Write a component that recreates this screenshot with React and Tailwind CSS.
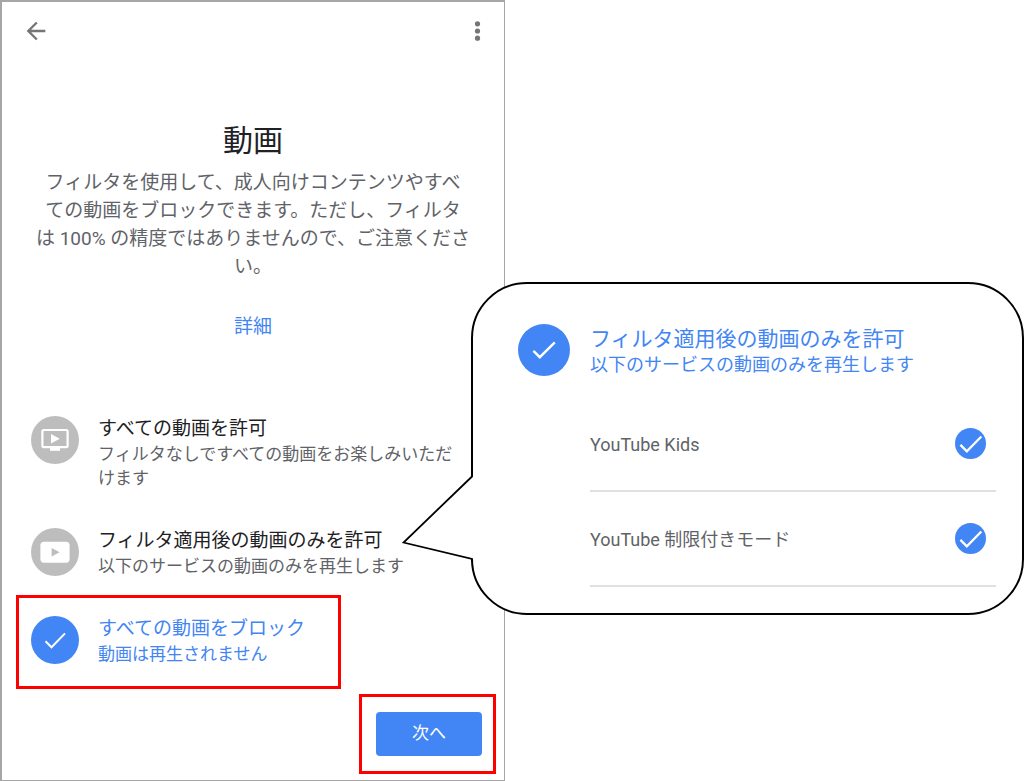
const OPTIONS = [
  {
    id: "allow",
    icon: "tv",
    title: "すべての動画を許可",
    note: "フィルタなしですべての動画をお楽しみいただけます",
  },
  {
    id: "filtered",
    icon: "player",
    title: "フィルタ適用後の動画のみを許可",
    note: "以下のサービスの動画のみを再生します",
  },
  {
    id: "block",
    icon: "check",
    title: "すべての動画をブロック",
    note: "動画は再生されません",
    selected: true,
  },
];

const SERVICES = [
  { id: "kids", name: "YouTube Kids" },
  { id: "restricted", name: "YouTube 制限付きモード" },
];

function OptionIcon({ kind }) {
  if (kind === "tv") {
    return (
      <svg viewBox="0 0 48 48" className="size-12 shrink-0" aria-hidden="true">
        <circle cx="24" cy="24" r="24" fill="#bdbdbd" />
        <rect x="11.4" y="14" width="25.2" height="17.2" rx="1.4" fill="none" stroke="#fff" strokeWidth="2.2" />
        <path d="M19 32h10v2.8H19z" fill="#fff" />
        <path d="M20 18v9.6l8.8-4.8z" fill="#fff" />
      </svg>
    );
  }
  if (kind === "player") {
    return (
      <svg viewBox="0 0 48 48" className="size-12 shrink-0" aria-hidden="true">
        <circle cx="24" cy="24" r="24" fill="#bdbdbd" />
        <rect x="9.4" y="13.7" width="29.2" height="21" rx="3.6" fill="#fff" />
        <path d="M20.6 20v8.6l8-4.3z" fill="#bdbdbd" />
      </svg>
    );
  }
  return (
    <svg viewBox="0 0 48 48" className="size-12 shrink-0" aria-hidden="true">
      <circle cx="24" cy="24" r="24" fill="#4285f4" />
      <path d="M14.5 25.3l6 6L34 17.4" fill="none" stroke="#fff" strokeWidth="2" />
    </svg>
  );
}

function Option({ option }) {
  return (
    <label className="relative flex cursor-pointer items-start gap-[19px]">
      <input type="radio" name="video-filter" defaultChecked={option.selected} className="sr-only" />
      <OptionIcon kind={option.icon} />
      <span className={option.selected ? "text-[#4285f4]" : "text-[#5f6368]"}>
        <span className={option.selected ? "block text-[19px] leading-[26px]" : "block text-[19px] leading-[26px] text-[#202124]"}>
          {option.title}
        </span>
        <span className="block text-[17px] leading-6">{option.note}</span>
      </span>
    </label>
  );
}

function PhoneScreen() {
  const [allow, filtered, block] = OPTIONS;
  return (
    <main className="flex min-h-screen w-[505px] shrink-0 flex-col border-2 border-r border-[#a6a6a6] pb-1.5">
      <header className="flex items-center justify-between pt-[15px] pr-3 pl-5">
        <button type="button" aria-label="戻る" className="text-[#757575]">
          <svg viewBox="0 0 24 24" className="size-7" fill="currentColor" aria-hidden="true">
            <path d="M20 11H7.83l5.59-5.59L12 4l-8 8 8 8 1.41-1.41L7.83 13H20v-2z" />
          </svg>
        </button>
        <button type="button" aria-label="その他" className="text-[#757575]">
          <svg viewBox="0 0 28 28" className="size-7" fill="currentColor" aria-hidden="true">
            <circle cx="13.5" cy="6.8" r="2.6" />
            <circle cx="13.5" cy="14" r="2.6" />
            <circle cx="13.5" cy="21.2" r="2.6" />
          </svg>
        </button>
      </header>

      <section className="mt-[76px] px-6 text-center">
        <h1 id="page-title" className="text-[30px] leading-10 text-[#202124]">動画</h1>
        <p className="mt-2 text-[19px] leading-7 text-[#5f6368]">
          フィルタを使用して、成人向けコンテンツやすべ
          <br />
          ての動画をブロックできます。ただし、フィルタ
          <br />は 100% の精度ではありませんので、ご注意くださ
          <br />
          い。
        </p>
        <a href="#details" className="mt-8 inline-block text-[19px] leading-7 text-[#4285f4]">
          詳細
        </a>
      </section>

      <fieldset className="mt-[75px] min-w-0" aria-labelledby="page-title">
        <div className="space-y-[38px] pr-11 pl-[29px]">
          <Option option={allow} />
          <Option option={filtered} />
        </div>
        <div className="mt-[17px] ml-3.5 w-[325px] border-[3px] border-[#ff0000] px-3 pt-[18px] pb-5">
          <Option option={block} />
        </div>
      </fieldset>

      <div className="mt-[5px] mr-2 self-end border-[3px] border-[#ff0000] py-[15px] pr-[11px] pl-3.5">
        <button type="button" className="block h-11 rounded-sm bg-[#4285f4] px-9 text-[17px] text-white">
          次へ
        </button>
      </div>
    </main>
  );
}

function Callout() {
  return (
    <aside className="relative mt-[282px] -ml-[34px] min-w-0 flex-1 self-start rounded-[56px] border-2 border-black bg-white pt-10 pr-[26px] pb-[26px] pl-[45px]">
      <svg viewBox="0 0 72 88" className="absolute top-[190px] -left-[71px] h-[88px] w-[72px]" aria-hidden="true">
        <path d="M72 2.5h-2L1.5 68.5 70 85h2z" fill="#fff" />
        <path d="M70 0v2.5L1.5 68.5 70 85v3" fill="none" stroke="#000" strokeWidth="1.8" />
      </svg>
      <div className="flex items-start gap-5">
        <svg viewBox="0 0 52 52" className="size-[52px] shrink-0" aria-hidden="true">
          <circle cx="26" cy="26" r="26" fill="#4285f4" />
          <path d="M15.4 26.8l6.4 6.4L36.8 18.4" fill="none" stroke="#fff" strokeWidth="2.4" />
        </svg>
        <div className="pt-px text-[#4285f4]">
          <h2 className="text-[21px] leading-7">フィルタ適用後の動画のみを許可</h2>
          <p className="text-[18px] leading-6">以下のサービスの動画のみを再生します</p>
        </div>
      </div>
      <ul className="mt-5 ml-[72px]">
        {SERVICES.map((service) => (
          <li key={service.id} className="border-b-2 border-[#e0e0e0]">
            <label className="relative flex h-[93px] cursor-pointer items-center justify-between pr-2.5 text-[18px] text-[#5f6368]">
              <span className="pt-0.5">{service.name}</span>
              <input type="checkbox" defaultChecked className="sr-only" />
              <svg viewBox="0 0 32 32" className="size-[31px] shrink-0" aria-hidden="true">
                <circle cx="16" cy="16" r="16" fill="#4285f4" />
                <path d="M5.6 17.4l6.6 6.6L27.2 8.8" fill="none" stroke="#fff" strokeWidth="2.4" />
              </svg>
            </label>
          </li>
        ))}
      </ul>
    </aside>
  );
}

export default function App() {
  return (
    <div className="flex min-h-screen bg-white font-['Roboto','Noto_Sans_CJK_JP',sans-serif]" lang="ja">
      <PhoneScreen />
      <Callout />
    </div>
  );
}
